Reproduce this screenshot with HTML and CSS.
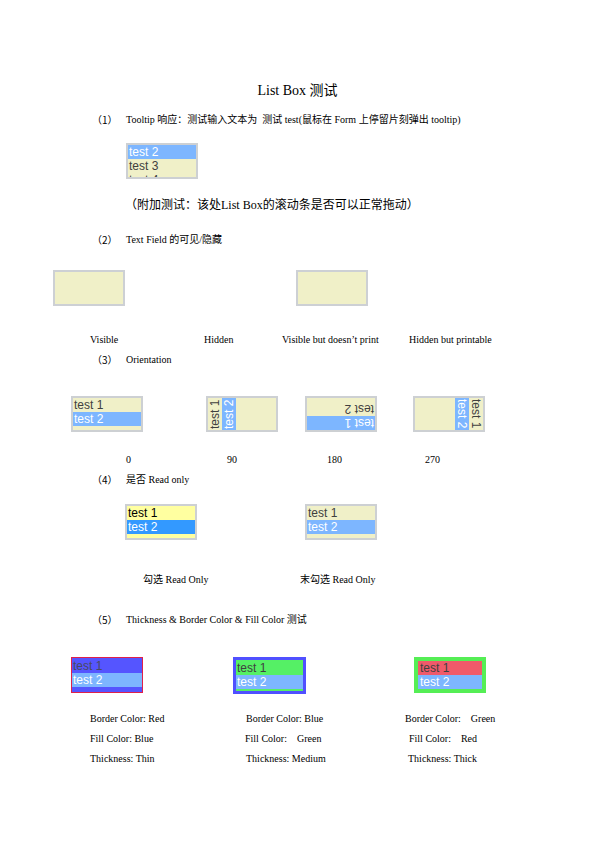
FILE: index.html
```html
<!DOCTYPE html>
<html>
<head>
<meta charset="utf-8">
<link rel="stylesheet" href="styles.css">
</head>
<body>
<div class="page">
  <h1 class="title">List Box 测试</h1>

  <div class="head h1"><span class="num">（1）</span><span>Tooltip 响应：测试输入文本为 &nbsp;测试 test(鼠标在 Form 上停留片刻弹出 tooltip)</span></div>
  <div class="row r1">
    <div class="lb">
      <div class="items">
        <div class="it sel">test 2</div>
        <div class="it">test 3</div>
        <div class="it">test 4</div>
      </div>
    </div>
  </div>
  <div class="note">（附加测试：该处<span class="ser">List Box</span>的滚动条是否可以正常拖动）</div>

  <div class="head h2"><span class="num">（2）</span><span>Text Field 的可见/隐藏</span></div>
  <div class="row r2">
    <div class="tf"></div>
    <div class="tf tf2"></div>
  </div>
  <div class="labels l2">
    <span class="c1">Visible</span><span class="c2">Hidden</span><span class="c3">Visible but doesn’t print</span><span>Hidden but printable</span>
  </div>

  <div class="head h3"><span class="num">（3）</span><span>Orientation</span></div>
  <div class="row r3">
    <div class="lb">
      <div class="items">
        <div class="it">test 1</div>
        <div class="it sel">test 2</div>
      </div>
    </div>
    <div class="lb o90">
      <div class="items">
        <div class="it">test 1</div>
        <div class="it sel">test 2</div>
      </div>
    </div>
    <div class="lb o180">
      <div class="items">
        <div class="it sel">test 1</div>
        <div class="it">test 2</div>
      </div>
    </div>
    <div class="lb o270">
      <div class="items">
        <div class="it">test 1</div>
        <div class="it sel">test 2</div>
      </div>
    </div>
  </div>
  <div class="labels l3">
    <span class="n1">0</span><span class="n2">90</span><span class="n3">180</span><span>270</span>
  </div>

  <div class="head h4"><span class="num">（4）</span><span>是否 Read only</span></div>
  <div class="row r4">
    <div class="lb ro">
      <div class="items">
        <div class="it">test 1</div>
        <div class="it sel">test 2</div>
      </div>
    </div>
    <div class="lb">
      <div class="items">
        <div class="it">test 1</div>
        <div class="it sel">test 2</div>
      </div>
    </div>
  </div>
  <div class="labels l4">
    <span class="k1">勾选 Read Only</span><span>末勾选 Read Only</span>
  </div>

  <div class="head h5"><span class="num">（5）</span><span>Thickness &amp; Border Color &amp; Fill Color 测试</span></div>
  <div class="row r5">
    <div class="lb thin">
      <div class="items">
        <div class="it">test 1</div>
        <div class="it sel">test 2</div>
      </div>
    </div>
    <div class="lb medium">
      <div class="items">
        <div class="it">test 1</div>
        <div class="it sel">test 2</div>
      </div>
    </div>
    <div class="lb thick">
      <div class="items">
        <div class="it">test 1</div>
        <div class="it sel">test 2</div>
      </div>
    </div>
  </div>
  <div class="props">
    <div class="pc p1">
      <div>Border Color: Red</div>
      <div>Fill Color: Blue</div>
      <div>Thickness: Thin</div>
    </div>
    <div class="pc p2">
      <div>Border Color: Blue</div>
      <div class="sh">Fill Color: &nbsp;&nbsp; Green</div>
      <div>Thickness: Medium</div>
    </div>
    <div class="pc p3">
      <div>Border Color: &nbsp;&nbsp; Green</div>
      <div class="sh2">Fill Color: &nbsp;&nbsp; Red</div>
      <div class="sh3">Thickness: Thick</div>
    </div>
  </div>
</div>
</body>
</html>
```

FILE: styles.css
```css
* { box-sizing: border-box; }
html, body { margin: 0; padding: 0; background: #ffffff; }
body {
  font-family: "Liberation Serif", "Noto Sans CJK SC", serif;
  color: #000;
  font-size: 10px;
  line-height: 12px;
}
.page { width: 595px; height: 841px; padding-top: 83px; }

.title {
  margin: 0;
  font-weight: normal;
  font-size: 14px;
  line-height: 16px;
  text-align: center;
}

.head { display: flex; padding-left: 92px; font-size: 10px; line-height: 12px; }
.head .num { width: 34px; font-family: "Noto Sans CJK SC", sans-serif; font-size: 10px; }
.h1 { margin-top: 15px; }
.h2 { margin-top: 22px; }
.h3 { margin-top: 8px; }
.h4 { margin-top: 8px; }
.h5 { margin-top: 28px; }

.row { display: flex; height: 36px; }
.r1 { margin-top: 17px; padding-left: 126px; }
.r2 { margin-top: 24px; padding-left: 53px; }
.r3 { margin-top: 30px; padding-left: 71px; }
.r4 { margin-top: 18px; padding-left: 125px; }
.r5 { margin-top: 31px; padding-left: 71px; }

.note {
  margin-top: 18px;
  padding-left: 125px;
  font-family: "Noto Sans CJK SC", sans-serif;
  font-size: 12px;
  line-height: 14px;
}
.note .ser { font-family: "Liberation Serif", serif; font-size: 12px; }

/* list box */
.lb {
  width: 72px;
  height: 36px;
  border: 2px solid #cdd0d3;
  background: #f0f0c8;
  overflow: hidden;
  flex: none;
}
.items { width: 100%; height: 100%; overflow: hidden; }
.it {
  height: 14px;
  line-height: 14px;
  font-family: "Liberation Sans", Arial, sans-serif;
  font-size: 12px;
  color: #404040;
  padding-left: 1px;
  white-space: nowrap;
}
.it.sel { background: #7db6ff; color: #ffffff; }

.r3 .lb:nth-child(2) { margin-left: 63px; }
.r3 .lb:nth-child(3) { margin-left: 27px; }
.r3 .lb:nth-child(4) { margin-left: 36px; }

.o90 .items { writing-mode: vertical-rl; transform: rotate(180deg); }
.o90 .it, .o270 .it { height: auto; width: 14px; padding-left: 0; padding-top: 1px; }
.o180 .items { transform: rotate(180deg); }
.o270 .items { writing-mode: vertical-rl; }

/* text fields */
.tf {
  width: 72px;
  height: 36px;
  border: 2px solid #cdd0d4;
  background: #f0f0c8;
}
.tf2 { margin-left: 171px; }

/* read only */
.r4 .lb:nth-child(2) { margin-left: 108px; }
.ro { background: #ffffa0; }
.ro .it { color: #000; }
.ro .it.sel { background: #3399ff; color: #fff; }

/* labels */
.labels { display: flex; white-space: nowrap; }
.l2 { margin-top: 28px; padding-left: 90px; }
.l2 .c1 { width: 114px; }
.l2 .c2 { width: 78px; }
.l2 .c3 { width: 127px; }
.l3 { margin-top: 22px; padding-left: 126px; }
.l3 .n1 { width: 101px; }
.l3 .n2 { width: 100px; }
.l3 .n3 { width: 98px; }
.l4 { margin-top: 34px; padding-left: 143px; }
.l4 .k1 { width: 157px; }

/* thickness */
.r5 .lb:nth-child(2) { margin-left: 90px; }
.r5 .lb:nth-child(3) { margin-left: 108px; }
.thin { border: 1px solid #e0204a; background: #5555ff; }
.thin .items { padding-top: 1px; }
.thin .it { color: #4a4a60; }
.medium { border: 3px solid #5050ff; background: #55f065; height: 37px; width: 73px; }
.medium .items { padding-top: 1px; }
.medium .it { color: #404040; }
.thick { border: 4px solid #55ee55; background: #f05a6a; }
.thick .it { color: #404040; padding-left: 2px; }
.r5 .lb .it.sel { color: #ffffff; }

.props { display: flex; margin-top: 16px; padding-left: 90px; line-height: 20px; white-space: nowrap; }
.pc { flex: none; }
.p1 { width: 156px; }
.p2 { width: 159px; }
.p2 .sh { margin-left: -1px; }
.p3 .sh2 { margin-left: 4px; }
.p3 .sh3 { margin-left: 3px; }
```
